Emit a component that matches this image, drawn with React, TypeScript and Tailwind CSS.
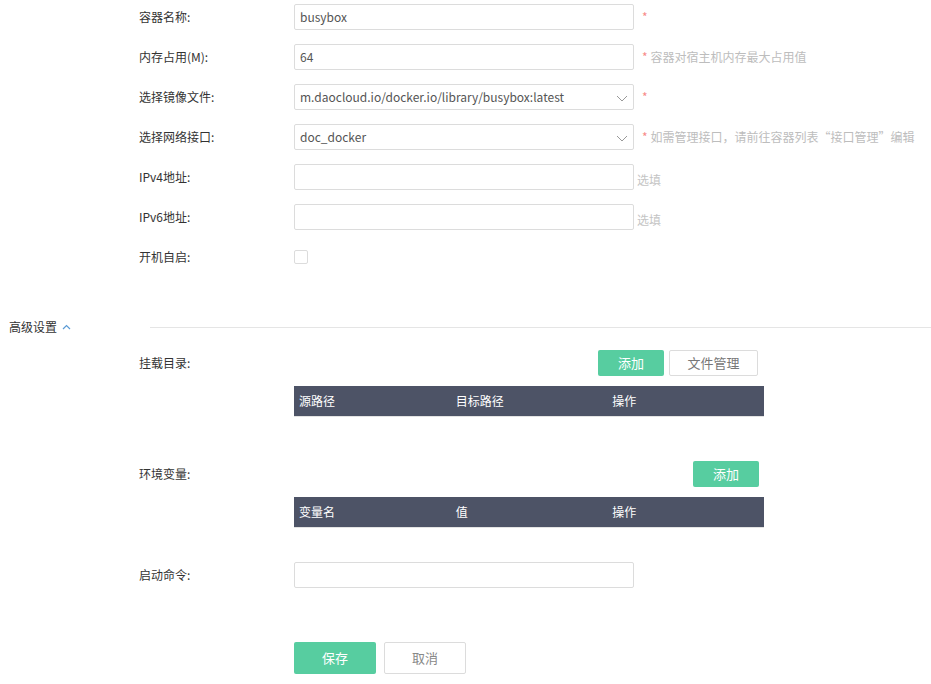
import React from "react";

const font = { fontFamily: '"Noto Sans CJK SC", "Noto Sans", sans-serif' };

function Chevron() {
  return (
    <svg width="12" height="7" viewBox="0 0 12 7" className="absolute right-[5px] top-[10px]">
      <polyline points="1,1 6,6 11,1" fill="none" stroke="#999" strokeWidth="1" />
    </svg>
  );
}

type FieldProps = {
  label: string;
  value?: string;
  select?: boolean;
  required?: boolean;
  hint?: string;
  optional?: boolean;
};

function Field({ label, value, select, required, hint, optional }: FieldProps) {
  return (
    <div className="flex items-center h-[26px]">
      <div className="w-[155px] text-[12px] text-[#333]">{label}</div>
      <div className="relative w-[340px] h-[26px] border border-[#dcdcdc] rounded-[2px] bg-white flex items-center pl-[5px] text-[12px] text-[#555]">
        {value}
        {select && <Chevron />}
      </div>
      {required && (
        <span className="ml-[8px] text-[12px] text-[#f78a8a] leading-none">*</span>
      )}
      {hint && <span className="ml-[3px] text-[12px] text-[#bdbdbd]">{hint}</span>}
      {optional && <span className="ml-[3px] mt-[6px] text-[12px] text-[#c4c4c4]">选填</span>}
    </div>
  );
}

function TableHead({ cols }: { cols: string[] }) {
  return (
    <div className="flex h-[31px] bg-[#4d5366] border-b border-[#e3e3e3] text-[12px] text-white items-center">
      {cols.map((c) => (
        <div key={c} className="w-[157px] pl-[5px]">
          {c}
        </div>
      ))}
    </div>
  );
}

export default function App() {
  return (
    <div className="w-[931px] h-[684px] bg-white overflow-hidden" style={font}>
      <div className="pl-[139px] pt-[4px] flex flex-col gap-[14px]">
        <Field label="容器名称:" value="busybox" required />
        <Field label="内存占用(M):" value="64" required hint="容器对宿主机内存最大占用值" />
        <Field label="选择镜像文件:" value="m.daocloud.io/docker.io/library/busybox:latest" select required />
        <Field
          label="选择网络接口:"
          value="doc_docker"
          select
          required
          hint="如需管理接口，请前往容器列表“接口管理”编辑"
        />
        <Field label="IPv4地址:" optional />
        <Field label="IPv6地址:" optional />
        <div className="flex items-center h-[26px]">
          <div className="w-[155px] text-[12px] text-[#333]">开机自启:</div>
          <div className="w-[14px] h-[14px] border border-[#dcdcdc] rounded-[2px]" />
        </div>
      </div>

      <div className="flex items-center mt-[47px] h-[20px]">
        <div className="pl-[9px] w-[150px] flex items-center gap-[5px] text-[12px] text-[#333]">
          高级设置
          <svg width="9" height="6" viewBox="0 0 9 6">
            <polyline points="1,5 4.5,1.5 8,5" fill="none" stroke="#5b9bd5" strokeWidth="1.2" />
          </svg>
        </div>
        <div className="flex-1 h-px bg-[#e5e5e5]" />
      </div>

      <div className="pl-[139px] mt-[13px]">
        <div className="flex">
          <div className="w-[155px] h-[26px] flex items-center text-[12px] text-[#333]">挂载目录:</div>
          <div className="w-[470px]">
            <div className="flex justify-end gap-[5px] pr-[6px]">
              <button className="w-[66px] h-[26px] rounded-[2px] bg-[#57cda0] text-white text-[13px]">添加</button>
              <button className="w-[89px] h-[26px] rounded-[2px] border border-[#dcdcdc] bg-white text-[#777] text-[13px]">
                文件管理
              </button>
            </div>
            <div className="mt-[10px]">
              <TableHead cols={["源路径", "目标路径", "操作"]} />
            </div>
          </div>
        </div>

        <div className="flex mt-[44px]">
          <div className="w-[155px] h-[26px] flex items-center text-[12px] text-[#333]">环境变量:</div>
          <div className="w-[470px]">
            <div className="flex justify-end pr-[5px]">
              <button className="w-[66px] h-[26px] rounded-[2px] bg-[#57cda0] text-white text-[13px]">添加</button>
            </div>
            <div className="mt-[10px]">
              <TableHead cols={["变量名", "值", "操作"]} />
            </div>
          </div>
        </div>

        <div className="mt-[34px]">
          <Field label="启动命令:" />
        </div>

        <div className="flex gap-[8px] mt-[54px] pl-[155px]">
          <button className="w-[82px] h-[32px] rounded-[2px] bg-[#57cda0] text-white text-[13px]">保存</button>
          <button className="w-[82px] h-[32px] rounded-[2px] border border-[#dcdcdc] bg-white text-[#888] text-[13px]">
            取消
          </button>
        </div>
      </div>
    </div>
  );
}
